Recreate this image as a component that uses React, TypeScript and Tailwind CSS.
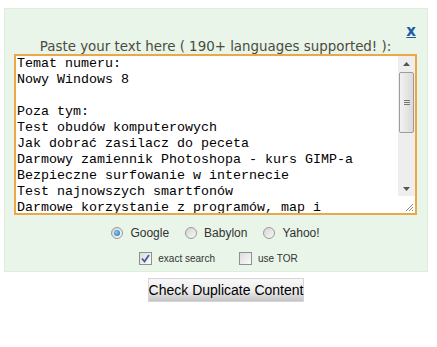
import React from "react";

const lines = [
  "Temat numeru:",
  "Nowy Windows 8",
  "",
  "Poza tym:",
  "Test obudów komputerowych",
  "Jak dobrać zasilacz do peceta",
  "Darmowy zamiennik Photoshopa - kurs GIMP-a",
  "Bezpieczne surfowanie w internecie",
  "Test najnowszych smartfonów",
  "Darmowe korzystanie z programów, map i",
];

function Radio({ checked, label }: { checked?: boolean; label: string }) {
  return (
    <label className="flex items-center gap-[7px]">
      <span className="relative flex h-[12px] w-[12px] items-center justify-center rounded-full border border-[#9a9a9a] bg-[linear-gradient(135deg,#d4d4d4,#f8f8f8)]">
        {checked ? (
          <span className="h-[6px] w-[6px] rounded-full bg-[radial-gradient(circle_at_40%_40%,#7fd0f5,#1a6aa8)]" />
        ) : null}
      </span>
      <span className="text-[12px] text-[#333]">{label}</span>
    </label>
  );
}

function Checkbox({ checked, label }: { checked?: boolean; label: string }) {
  return (
    <label className="flex items-center gap-[6px]">
      <span className="flex h-[13px] w-[13px] items-center justify-center border border-[#8e8f8f] bg-[linear-gradient(135deg,#dcdcdc,#fbfbfb)]">
        {checked ? (
          <svg width="9" height="9" viewBox="0 0 9 9">
            <path d="M1 4.5 L3.5 7.5 L8 1" fill="none" stroke="#4a5a9c" strokeWidth="1.8" />
          </svg>
        ) : null}
      </span>
      <span className="text-[10px] text-[#333]">{label}</span>
    </label>
  );
}

function Scrollbar() {
  return (
    <div className="flex w-[17px] flex-col bg-[#eeeeee]">
      <div className="flex h-[16px] items-center justify-center">
        <svg width="7" height="4" viewBox="0 0 7 4">
          <path d="M0 4 L3.5 0 L7 4 Z" fill="#555" />
        </svg>
      </div>
      <div className="mx-[1px] flex h-[61px] items-center justify-center rounded-[2px] border border-[#9c9c9c] bg-[linear-gradient(90deg,#f2f2f2,#dadada)]">
        <div className="flex flex-col gap-[1px]">
          <div className="h-px w-[6px] bg-[#777]" />
          <div className="h-px w-[6px] bg-[#777]" />
          <div className="h-px w-[6px] bg-[#777]" />
        </div>
      </div>
      <div className="flex-1" />
      <div className="flex h-[14px] items-center justify-center">
        <svg width="7" height="4" viewBox="0 0 7 4">
          <path d="M0 0 L3.5 4 L7 0 Z" fill="#555" />
        </svg>
      </div>
      <div className="relative h-[17px] bg-white">
        <svg className="absolute bottom-[1px] right-[1px]" width="9" height="9" viewBox="0 0 9 9">
          <path d="M1 8 L8 1 M4 8 L8 4 M7 8 L8 7" stroke="#888" strokeWidth="1" />
        </svg>
      </div>
    </div>
  );
}

export default function App() {
  return (
    <div className="h-[347px] w-[437px] bg-white font-['Liberation_Sans',Arial,sans-serif]">
      <div className="pt-[8px] pl-[4px]">
        <div className="flex h-[264px] w-[424px] flex-col border border-[#dbeedb] bg-[#e8f5e8] pl-[9px] pr-[10px] pt-[14px]">
          <div className="flex h-[16px] justify-end pr-[1px]">
            <a className="font-['DejaVu_Sans',Verdana,sans-serif] text-[15px] font-bold leading-[16px] text-[#1d5ea6] underline">x</a>
          </div>
          <div className="h-[15px] text-center font-['DejaVu_Sans',Verdana,sans-serif] text-[13.4px] leading-[15px] text-[#4b4b3e]">
            Paste your text here ( 190+ languages supported! ):
          </div>
          <div className="flex h-[161px] border-2 border-[#eba748] bg-white">
            <div className="flex-1 overflow-hidden pl-[1px] font-['Liberation_Mono','Courier_New',monospace] text-[13.33px] leading-[16px] text-black">
              {lines.map((l, i) => (
                <div key={i} className="h-[16px] whitespace-pre">
                  {l}
                </div>
              ))}
            </div>
            <Scrollbar />
          </div>
          <div className="mt-[8px] flex h-[20px] items-center justify-center gap-[16px]">
            <Radio checked label="Google" />
            <Radio label="Babylon" />
            <Radio label="Yahoo!" />
          </div>
          <div className="mt-[6px] flex h-[18px] items-center justify-center gap-[24px] pl-[6px]">
            <Checkbox checked label="exact search" />
            <Checkbox label="use TOR" />
          </div>
        </div>
      </div>
      <div className="mt-[6px] flex justify-center pl-[15px]">
        <button className="h-[24px] border border-[#d6d6d6] bg-[linear-gradient(180deg,#f8f8f8_0%,#ececec_55%,#c4c4c4_100%)] px-0 text-[14px] leading-[20px] text-black">
          Check Duplicate Content
        </button>
      </div>
    </div>
  );
}
